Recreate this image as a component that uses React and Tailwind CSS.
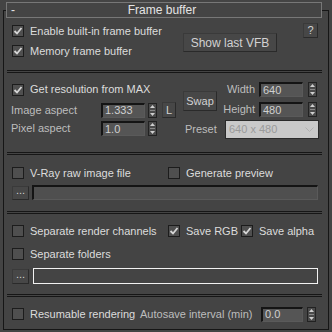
import React from 'react';

const font = { fontFamily: '"Liberation Sans", Arial, sans-serif' };

function Check({ checked, label, className = '' }) {
  return (
    <div className={`flex items-center h-[12px] ${className}`}>
      <div className="w-[12px] h-[12px] border border-[#1c1c1c] bg-[#4f4f4f] flex items-center justify-center">
        {checked && (
          <svg width="10" height="10" viewBox="0 0 10 10">
            <path d="M1.5 5 L4 7.5 L8.5 2" stroke="#d6d6d6" strokeWidth="1.8" fill="none" />
          </svg>
        )}
      </div>
      <span className="ml-[6px] text-[11px] text-[#dcdcdc] leading-none whitespace-nowrap">{label}</span>
    </div>
  );
}

function Field({ value, w }) {
  return (
    <div className={`h-[15px] ${w} border-2 border-t-[#141414] border-l-[#141414] border-b-[#5a5a5a] border-r-[#5a5a5a] border-b border-r bg-[#555555] flex items-center pl-[2px] text-[11px] text-[#cfcfcf] leading-none`}>
      {value}
    </div>
  );
}

function Spin() {
  return (
    <div className="w-[9px] h-[15px] border border-[#222] bg-[#4a4a4a] flex flex-col items-center justify-center gap-[2px]">
      <svg width="5" height="3" viewBox="0 0 5 3"><path d="M0 3 L2.5 0 L5 3 Z" fill="#cfcfcf" /></svg>
      <div className="w-[5px] h-px bg-[#888]" />
      <svg width="5" height="3" viewBox="0 0 5 3"><path d="M0 0 L2.5 3 L5 0 Z" fill="#cfcfcf" /></svg>
    </div>
  );
}

function Btn({ children, className = '' }) {
  return (
    <div className={`border border-[#2a2a2a] border-t-[#3a3a3a] border-l-[#3a3a3a] bg-[#474747] flex items-center justify-center text-[11px] text-[#d2d2d2] leading-none ${className}`}>
      {children}
    </div>
  );
}

function Sep() {
  return <div className="ml-[3px] w-[315px] h-[3px] border-y border-[#161616]" />;
}

export default function App() {
  return (
    <div className="w-[332px] h-[332px] bg-[#444444] pt-[2px]" style={font}>
      {/* rollout title */}
      <div className="relative z-10 ml-[6px] w-[316px] h-[16px] border border-[#777] bg-[#444444] flex items-center px-[4px] text-[12px] text-[#e4e4e4]">
        <span className="w-[10px]">-</span>
        <span className="flex-1 text-center pr-[14px]">Frame buffer</span>
      </div>

      <div className="ml-[3px] -mt-[8px] w-[326px] h-[320px] border border-[#161616] pt-[7px]">
        {/* built-in frame buffer */}
        <div className="h-[52px] flex">
          <div className="w-[179px] pl-[8px] pt-[7px] flex flex-col gap-[8px]">
            <Check checked label="Enable built-in frame buffer" />
            <Check checked label="Memory frame buffer" />
          </div>
          <Btn className="mt-[15px] w-[94px] h-[19px] text-[12px]">Show last VFB</Btn>
          <Btn className="mt-[5px] ml-[26px] w-[15px] h-[15px]">?</Btn>
        </div>
        <Sep />

        {/* resolution */}
        <div className="h-[79px] flex">
          <div className="w-[179px] pl-[8px] pt-[9px] flex flex-col">
            <Check checked label="Get resolution from MAX" className="h-[15px]" />
            <div className="mt-[5px] flex items-center h-[16px] -ml-[1px]">
              <span className="w-[90px] text-[11px] text-[#bdbdbd]">Image aspect</span>
              <Field value="1.333" w="w-[44px]" />
              <div className="ml-[3px]"><Spin /></div>
              <Btn className="ml-[5px] w-[14px] h-[16px]">L</Btn>
            </div>
            <div className="mt-[3px] flex items-center h-[15px] -ml-[1px]">
              <span className="w-[90px] text-[11px] text-[#bdbdbd]">Pixel aspect</span>
              <Field value="1.0" w="w-[44px]" />
              <div className="ml-[3px]"><Spin /></div>
            </div>
          </div>
          <div className="flex flex-col">
            <div className="flex">
              <Btn className="mt-[18px] w-[34px] h-[20px]">Swap</Btn>
              <div className="pt-[9px] flex flex-col gap-[5px]">
                <div className="flex items-center h-[15px]">
                  <span className="w-[38px] text-right text-[11px] text-[#bdbdbd]">Width</span>
                  <div className="ml-[4px]"><Field value="640" w="w-[44px]" /></div>
                  <div className="ml-[5px]"><Spin /></div>
                </div>
                <div className="flex items-center h-[15px]">
                  <span className="w-[38px] text-right text-[11px] text-[#bdbdbd]">Height</span>
                  <div className="ml-[4px]"><Field value="480" w="w-[44px]" /></div>
                  <div className="ml-[5px]"><Spin /></div>
                </div>
              </div>
            </div>
            <div className="mt-[3px] flex items-center h-[19px]">
              <span className="ml-[2px] w-[40px] text-[11px] text-[#bdbdbd]">Preset</span>
              <div className="w-[94px] h-[19px] border border-[#2a2a2a] bg-[#c9c9c9] flex items-center justify-between pl-[3px] pr-[4px] text-[11px] text-[#9a9a9a]">
                <span>640 x 480</span>
                <svg width="9" height="5" viewBox="0 0 9 5"><path d="M0.5 0.5 L4.5 4.5 L8.5 0.5" stroke="#b0b0b0" fill="none" /></svg>
              </div>
            </div>
          </div>
        </div>
        <Sep />

        {/* raw image */}
        <div className="h-[56px] pl-[8px] pt-[12px] flex flex-col">
          <div className="flex">
            <Check label="V-Ray raw image file" className="w-[156px]" />
            <Check label="Generate preview" />
          </div>
          <div className="mt-[6px] flex items-center">
            <Btn className="w-[17px] h-[14px] pb-[4px]">...</Btn>
            <div className="ml-[3px] w-[286px] h-[15px] border-2 border-t-[#141414] border-l-[#141414] border-b border-r border-b-[#5a5a5a] border-r-[#5a5a5a] bg-[#4f4f4f]" />
          </div>
        </div>
        <Sep />

        {/* render channels */}
        <div className="h-[80px] pl-[8px] pt-[11px] flex flex-col">
          <div className="flex">
            <Check label="Separate render channels" className="w-[156px]" />
            <Check checked label="Save RGB" className="w-[73px]" />
            <Check checked label="Save alpha" />
          </div>
          <Check label="Separate folders" className="mt-[11px]" />
          <div className="mt-[8px] flex items-center">
            <Btn className="w-[17px] h-[15px] pb-[4px]">...</Btn>
            <div className="ml-[4px] w-[285px] h-[16px] border border-[#f2f2f2] bg-[#444444]" />
          </div>
        </div>
        <Sep />

        {/* resumable */}
        <div className="pl-[8px] pt-[9px] flex items-center">
          <Check label="Resumable rendering" className="w-[128px]" />
          <span className="text-[11px] text-[#bdbdbd] w-[121px]">Autosave interval (min)</span>
          <Field value="0.0" w="w-[42px]" />
          <div className="ml-[4px]"><Spin /></div>
        </div>
      </div>
    </div>
  );
}
